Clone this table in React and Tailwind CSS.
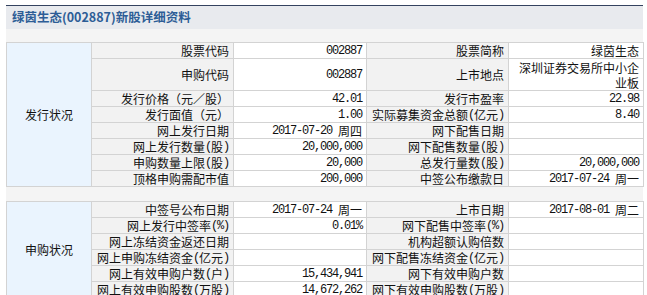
import React from 'react'

const info = [
  ['股票代码', '002887', '股票简称', '绿茵生态'],
  ['申购代码', '002887', '上市地点', 'WRAP'],
  ['发行价格（元／股）', '42.01', '发行市盈率', '22.98'],
  ['发行面值（元）', '1.00', '实际募集资金总额(亿元)', '8.40'],
  ['网上发行日期', '2017-07-20 周四', '网下配售日期', ''],
  ['网上发行数量(股)', '20,000,000', '网下配售数量(股)', ''],
  ['申购数量上限(股)', '20,000', '总发行量数(股)', '20,000,000'],
  ['顶格申购需配市值', '200,000', '中签公布缴款日', '2017-07-24 周一'],
]

const subscribe = [
  ['中签号公布日期', '2017-07-24 周一', '上市日期', '2017-08-01 周二'],
  ['网上发行中签率(%)', '0.01%', '网下配售中签率(%)', ''],
  ['网上冻结资金返还日期', '', '机构超额认购倍数', ''],
  ['网上申购冻结资金(亿元)', '', '网下配售冻结资金(亿元)', ''],
  ['网上有效申购户数(户)', '15,434,941', '网下有效申购户数', ''],
  ['网上有效申购股数(万股)', '14,672,262', '网下有效申购股数(万股)', ''],
]

// ascii runs get a narrow mono face, like the half-width glyphs of the original
function Txt({ text }) {
  if (!text) return null
  const parts = text.split(/([\x20-\x7E]+)/).filter(Boolean)
  return parts.map((p, i) =>
    /^[\x20-\x7E]+$/.test(p) ? (
      <span key={i} className="font-['Liberation_Mono',monospace] tracking-[-1.2px] whitespace-pre leading-none">{p}</span>
    ) : (
      <span key={i} className="leading-none">{p}</span>
    )
  )
}

function Cell({ bg, tall, children }) {
  return (
    <td className={`border border-[#d3d3d3] p-0 align-middle ${bg}`}>
      <div className={`${tall ? 'h-[31px]' : 'h-[15px]'} flex items-center justify-end px-[4px] overflow-hidden whitespace-nowrap`}>
        {children}
      </div>
    </td>
  )
}

function Section({ title, rows }) {
  return (
    <table className="w-[637px] table-fixed border-collapse text-[12px] text-[#111]">
      <colgroup>
        <col className="w-[85px]" />
        <col className="w-[142px]" />
        <col className="w-[133px]" />
        <col className="w-[142px]" />
        <col className="w-[135px]" />
      </colgroup>
      <tbody>
        {rows.map((r, i) => {
          const tall = r[3] === 'WRAP'
          return (
            <tr key={i}>
              {i === 0 && (
                <td rowSpan={rows.length} className="border border-[#d3d3d3] bg-[#eaf4fe] p-0 text-center align-middle leading-none">
                  {title}
                </td>
              )}
              <Cell bg="bg-[#f2f2f2]" tall={tall}><Txt text={r[0]} /></Cell>
              <Cell bg="bg-white" tall={tall}><Txt text={r[1]} /></Cell>
              <Cell bg="bg-[#f2f2f2]" tall={tall}><Txt text={r[2]} /></Cell>
              <Cell bg="bg-white" tall={tall}>
                {tall ? (
                  <div className="flex flex-col items-end leading-[15px]">
                    <span>深圳证券交易所中小企</span>
                    <span>业板</span>
                  </div>
                ) : (
                  <Txt text={r[3]} />
                )}
              </Cell>
            </tr>
          )
        })}
      </tbody>
    </table>
  )
}

export default function App() {
  return (
    <div className="min-h-screen bg-white pt-[5px] pl-[6px] font-['Noto_Sans_CJK_SC',sans-serif]">
      <div className="w-[637px]">
        <div className="h-[24px] border-t border-[#34425f] bg-[#e8eaee] pl-[6px] flex items-center">
          <span className="text-[12.5px] font-bold text-[#2d5d96]">绿茵生态(002887)新股详细资料</span>
        </div>
        <div className="h-[13px] bg-[#f4f4f4]" />
        <Section title="发行状况" rows={info} />
        <div className="h-[14px] bg-[#f4f4f4]" />
        <Section title="申购状况" rows={subscribe} />
      </div>
    </div>
  )
}
